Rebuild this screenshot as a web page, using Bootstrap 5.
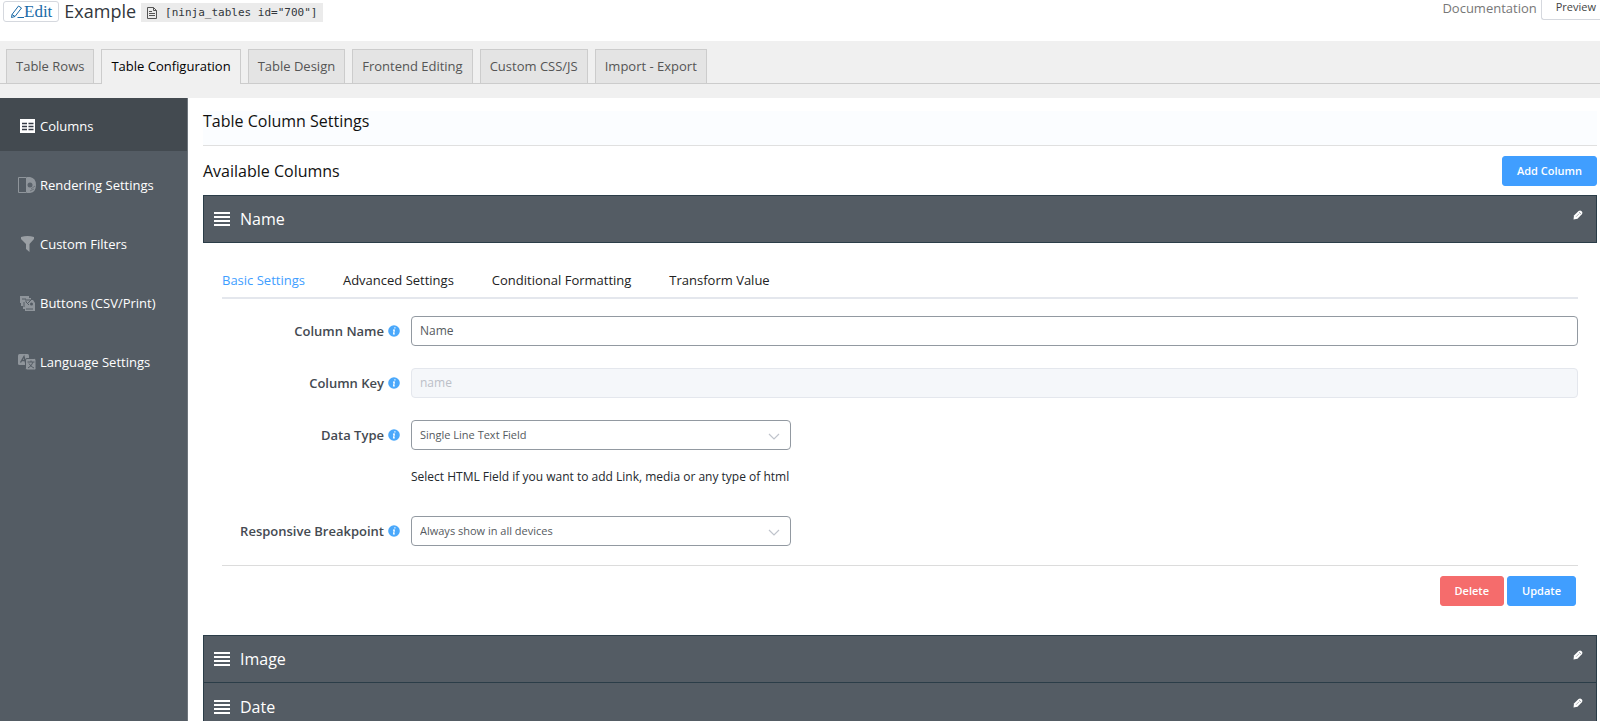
<!DOCTYPE html>
<html lang="en">
<head>
<meta charset="utf-8">
<meta name="viewport" content="width=device-width, initial-scale=1">
<title>Example - Table Configuration</title>
<link href="https://cdn.jsdelivr.net/npm/bootstrap@5.3.0/dist/css/bootstrap.min.css" rel="stylesheet">
<style>
  body { font-family: "Open Sans", "Noto Sans", sans-serif; font-size: 13px; line-height: 20px; color: #23282d; background: #fff; }
  svg { display: block; flex: none; }
  a { text-decoration: none; }

  .page-top { min-height: 41px; flex: none; padding-left: 3px; }
  .btn-edit { font: 17px/17px "Liberation Serif", serif; color: #1a6aa8; background: #fff; border: 1px solid #d5d8de; border-radius: 3px; padding: 1px 6px; margin-top: 1px; }
  .page-title { font-size: 18px; line-height: 22px; font-weight: 400; color: #32373c; margin: 0 5px; }
  .shortcode { font: 11px/19px "DejaVu Sans Mono", monospace; color: #32373c; background: #ebebeb; padding: 0 6px; margin-top: 3px; }
  .top-links a { color: #777; line-height: 16px; }
  .btn-preview { font-size: 11px; line-height: 14px; font-weight: 500; color: #444; background: #fff; border: 1px solid #d5d8de; border-width: 0 0 1px 1px; border-radius: 0 0 0 3px; padding: 0 4px 5px 14px; }

  .tab-band { background: #f0f0f0; padding: 8px 0 14px; flex: none; }
  .main-tabs { border-bottom: 1px solid #ccc; padding-left: 6px; gap: 7px; }
  .main-tabs .nav-link { border: 1px solid #ccc; border-bottom: 0; border-radius: 0; margin: 0; padding: 6px 9px; background: #e4e4e4; color: #555; font-weight: 500; }
  .main-tabs .nav-link.active { background: #f0f0f0; color: #000; border-color: #ccc; margin-bottom: -1px; padding-bottom: 8px; }

  .side-menu { width: 188px; flex: none; background: #545c64; border-right: 1px solid #6f767d; gap: 6px; }
  .side-menu a { color: #fff; height: 53px; padding: 3px 0 0 18px; gap: 4px; font-weight: 500; }
  .side-menu a.active { background: #434a50; }
  .side-menu svg { width: 18px; }

  .content { padding: 13px 3px 0 15px; }
  .section-title { font-size: 16px; line-height: 20px; font-weight: 400; color: #111; margin: 0; }
  .title-row { background: #fbfdff; border-bottom: 1px solid #e0e0e0; padding-bottom: 14px; }
  .list-row { padding: 10px 0 9px; }
  .btn-act { color: #fff; font-size: 11px; line-height: 18px; font-weight: 600; border: 1px solid; border-radius: 3px; padding: 5px 14px; }
  .btn-blue { background: #409eff; border-color: #409eff; }
  .btn-red { background: #f56c6c; border-color: #f56c6c; }
  .btn-act:hover { color: #fff; filter: brightness(.95); }

  .col-bar { background: #545c64; border: 1px solid #2b3d48; color: #fff; min-height: 48px; padding: 0 13px 0 10px; }
  .col-bar div { gap: 10px; }
  .col-bar h3 { font-size: 16px; line-height: 24px; font-weight: 400; margin: 0; }
  .col-bar + .col-bar { border-top: 0; }
  .col-bar button { background: none; border: 0; padding: 0 0 8px; }

  .col-panel { padding: 27px 19px 29px; }
  .sub-tabs { border-bottom: 2px solid #e4e7ed; gap: 38px; margin-bottom: 17px; }
  .sub-tabs .nav-link { padding: 0 0 7px; color: #222; font-weight: 500; }
  .sub-tabs .nav-link.active { color: #409eff; }
  .field-row { display: grid; grid-template-columns: 178px 1fr; column-gap: 11px; align-items: center; margin-bottom: 22px; }
  .field-row label { color: #444a52; font-weight: 600; gap: 4px; }
  .field-row .form-control, .field-row .form-select { font-size: 12px; line-height: 18px; color: #555a60; border: 1px solid #9299a1; border-radius: 4px; }
  .field-row .form-control { padding: 5px 8px; }
  .field-row .form-control:disabled { background: #f5f7fa; border-color: #e4e7ed; color: #bcc0c8; }
  .field-row .form-select { width: 380px; max-width: 100%; padding: 5px 28px 5px 8px; font-size: 11px; line-height: 18px; background-position: right 10px top 11px; background-size: 12px 10px;
    background-image: url("data:image/svg+xml,%3Csvg xmlns='http://www.w3.org/2000/svg' viewBox='0 0 12 10'%3E%3Cpath d='M1 2l5 5 5-5' fill='none' stroke='%23c0c4cc' stroke-width='1.2'/%3E%3C/svg%3E"); }
  .help { grid-column: 2; font-size: 12px; margin: 17px 0 7px; }
  .panel-foot { border-top: 1px solid #dcdcdc; padding: 10px 2px 0; gap: 3px; margin-top: -3px; }
</style>
</head>
<body>
<svg class="d-none" aria-hidden="true">
  <symbol id="i-info" viewBox="0 0 12 12"><circle cx="6" cy="6" r="5.8" fill="#4aa8fb"/><path d="M6.900 2.300v1.300M5 5.200h1.300L5.600 8.900h1.200" fill="none" stroke="#fff" stroke-width="1.200"/></symbol>
  <symbol id="i-lines" viewBox="0 0 16 14"><path d="M0 1h16M0 5h16M0 9h16M0 13h16" stroke="#fff" stroke-width="2"/></symbol>
  <symbol id="i-pen" viewBox="0 0 10 10"><path d="M.5 9.500l.5-4L5.600 1q1.500-1.300 3 .2t.2 3L4.500 8.800z" fill="#fff"/><path d="M3 6.800L6.300 3.500M6 2l2 2" stroke="#8a9097" stroke-width=".7"/></symbol>
</svg>
<div class="vh-100 d-flex flex-column overflow-hidden">
  <header class="page-top d-flex align-items-start justify-content-between">
    <div class="d-flex align-items-start">
      <button type="button" class="btn-edit d-flex align-items-center">
        <svg width="14" height="14" viewBox="0 0 14 14" fill="none" stroke="#1a6aa8"><path d="M2 9.500L8.500 1l3 2L5 11.500l-3.500 1zM2 9.500l3 2M7.500 12.500H14"/></svg>Edit</button>
      <h1 class="page-title">Example</h1>
      <code class="shortcode d-flex align-items-center gap-2"><svg width="10" height="12" viewBox="0 0 10 12" fill="none" stroke="#555"><path d="M.5.5h6l3 3v8h-9zM6.500.5v3h3M2 4.500h3M2 6.500h6M2 8.500h6"/></svg>[ninja_tables id="700"]</code>
    </div>
    <div class="top-links d-flex align-items-start">
      <a href="#" class="me-1">Documentation</a>
      <button type="button" class="btn-preview">Preview</button>
    </div>
  </header>

  <div class="tab-band">
    <nav class="main-tabs nav nav-tabs">
      <a class="nav-link" href="#">Table Rows</a>
      <a class="nav-link active" href="#" aria-current="page">Table Configuration</a>
      <a class="nav-link" href="#">Table Design</a>
      <a class="nav-link" href="#">Frontend Editing</a>
      <a class="nav-link" href="#">Custom CSS/JS</a>
      <a class="nav-link" href="#">Import - Export</a>
    </nav>
  </div>

  <div class="d-flex flex-grow-1 overflow-hidden">
    <nav class="side-menu d-flex flex-column">
      <a href="#" class="active d-flex align-items-center"><svg height="16" viewBox="0 0 18 16"><path d="M2 1h15v14H2z" fill="#fff"/><path d="M4 5.500h5M10.500 5.500h5M4 8.500h5M10.500 8.500h5M4 11.500h5M10.500 11.500h5" stroke="#353b45" stroke-width="1.300"/></svg>Columns</a>
      <a href="#" class="d-flex align-items-center"><svg height="16" viewBox="0 0 18 16"><path d="M.5.5h8v15h-8z" fill="none" stroke="#8f959b"/><path d="M9 0h3q6 1 6 8t-6 8H9z" fill="#8f959b"/><circle cx="12" cy="8" r="2.500" fill="#5b636b"/><path d="M13 12l4-3M12 14l4-2" stroke="#6c737a"/></svg>Rendering Settings</a>
      <a href="#" class="d-flex align-items-center"><svg height="16" viewBox="0 0 18 16"><path d="M3 1q6.500-2 13 0v2l-4.500 5v8L8 13V8L3 3z" fill="#9a9fa4"/></svg>Custom Filters</a>
      <a href="#" class="d-flex align-items-center"><svg height="16" viewBox="0 0 18 16"><path d="M2 1h9v2h2v2h2l2 3v8H7v-2H5v-3H3V8H2z" fill="#8f959b"/><path d="M4 4h4v3l3 3M6 7v5M9 5h4l-3 3M8 14h7" stroke="#545c64" fill="none"/><circle cx="13.500" cy="9" r="1.500" fill="#545c64"/></svg>Buttons (CSV/Print)</a>
      <a href="#" class="d-flex align-items-center"><svg height="16" viewBox="0 0 18 16"><rect width="11" height="11" rx="1.500" fill="#8f959b"/><path d="M2.500 8.500L6 2.500l1.500 6M4 6.500h3" stroke="#545c64" stroke-width="1.300" fill="none"/><rect x="7.500" y="4.500" width="10.500" height="11.500" rx="1.500" fill="#8f959b" stroke="#545c64"/><path d="M9.500 8h7M13 6.500V8M15 8q-1 4-5 6M11 9.500q2 3.500 5 4.500" stroke="#545c64" fill="none"/></svg>Language Settings</a>
    </nav>

    <main class="content flex-grow-1">
      <div class="title-row"><h2 class="section-title">Table Column Settings</h2></div>
      <div class="list-row d-flex justify-content-between align-items-center">
        <h2 class="section-title">Available Columns</h2>
        <button type="button" class="btn-act btn-blue">Add Column</button>
      </div>

      <div class="col-bar d-flex align-items-center justify-content-between">
        <div class="d-flex align-items-center"><svg width="16" height="14"><use href="#i-lines"/></svg><h3>Name</h3></div>
        <button type="button" aria-label="Edit Name"><svg width="10" height="10"><use href="#i-pen"/></svg></button>
      </div>

      <form class="col-panel">
        <nav class="sub-tabs nav">
          <a class="nav-link active" href="#">Basic Settings</a>
          <a class="nav-link" href="#">Advanced Settings</a>
          <a class="nav-link" href="#">Conditional Formatting</a>
          <a class="nav-link" href="#">Transform Value</a>
        </nav>
        <div class="field-row">
          <label for="cname" class="d-flex align-items-center justify-content-end">Column Name <svg width="12" height="12"><use href="#i-info"/></svg></label>
          <input id="cname" class="form-control" type="text" value="Name">
        </div>
        <div class="field-row">
          <label for="ckey" class="d-flex align-items-center justify-content-end">Column Key <svg width="12" height="12"><use href="#i-info"/></svg></label>
          <input id="ckey" class="form-control" type="text" value="name" disabled>
        </div>
        <div class="field-row">
          <label for="dtype" class="d-flex align-items-center justify-content-end">Data Type <svg width="12" height="12"><use href="#i-info"/></svg></label>
          <select id="dtype" class="form-select"><option>Single Line Text Field</option></select>
          <p class="help">Select HTML Field if you want to add Link, media or any type of html</p>
        </div>
        <div class="field-row">
          <label for="bpoint" class="d-flex align-items-center justify-content-end">Responsive Breakpoint <svg width="12" height="12"><use href="#i-info"/></svg></label>
          <select id="bpoint" class="form-select"><option>Always show in all devices</option></select>
        </div>
        <div class="panel-foot d-flex justify-content-end">
          <button type="button" class="btn-act btn-red">Delete</button>
          <button type="button" class="btn-act btn-blue">Update</button>
        </div>
      </form>

      <div class="col-bar d-flex align-items-center justify-content-between">
        <div class="d-flex align-items-center"><svg width="16" height="14"><use href="#i-lines"/></svg><h3>Image</h3></div>
        <button type="button" aria-label="Edit Image"><svg width="10" height="10"><use href="#i-pen"/></svg></button>
      </div>
      <div class="col-bar d-flex align-items-center justify-content-between">
        <div class="d-flex align-items-center"><svg width="16" height="14"><use href="#i-lines"/></svg><h3>Date</h3></div>
        <button type="button" aria-label="Edit Date"><svg width="10" height="10"><use href="#i-pen"/></svg></button>
      </div>
    </main>
  </div>
</div>
<script src="https://cdn.jsdelivr.net/npm/bootstrap@5.3.0/dist/js/bootstrap.bundle.min.js"></script>
</body>
</html>
